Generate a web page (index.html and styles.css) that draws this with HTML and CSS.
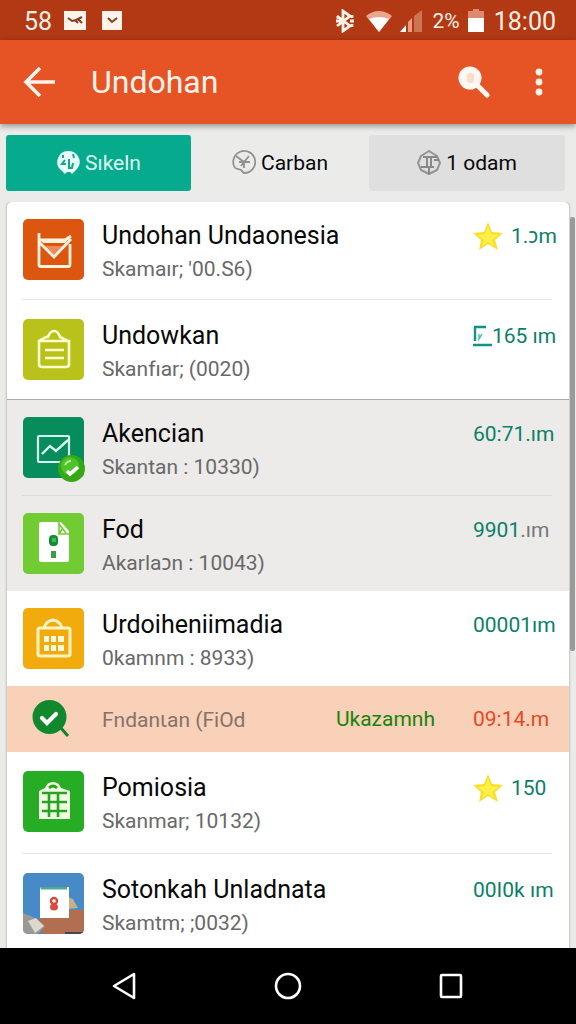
FILE: index.html
```html
<!DOCTYPE html>
<html lang="id">
<head>
<meta charset="utf-8">
<meta name="viewport" content="width=device-width, initial-scale=1">
<title>Undohan</title>
<link rel="stylesheet" href="styles.css">
</head>
<body>
<div class="status">
  <div class="status-group">
    <span class="status-count">58</span>
    <svg class="note" width="22" height="20" viewBox="0 0 22 20"><path fill="#fff3ea" d="M0 0h22v19H0z"/><path d="M4 7l4 3 4-1 6-3M11 9l3 3M14 8l4 4" fill="none" stroke="#8a3a20" stroke-width="2"/></svg>
    <svg width="20" height="20" viewBox="0 0 20 20"><path fill="#fff3ea" d="M0 0h20v19H0z"/><path d="M6 7l4 4 5-4" fill="none" stroke="#8a3a20" stroke-width="2"/></svg>
  </div>
  <div class="status-group status-right">
    <svg width="20" height="24" viewBox="0 0 20 24"><path d="M2 7l13 10-7 5V2l7 5L2 17M1 12h6M15 12h4M3 7v3M17 6v3M17 15v3" fill="none" stroke="#fff3ea" stroke-width="2.8"/></svg>
    <svg width="28" height="24" viewBox="0 0 28 24"><path d="M1 7Q14-3 27 7L14 23z" fill="#e9a68c"/><path d="M4 10Q14 6 24 10L14 23z" fill="#fff"/></svg>
    <svg class="signal" width="24" height="24" viewBox="0 0 24 24"><path d="M1 23l6-7v7z" fill="#fff"/><path d="M9 13l4-4v14H9z" fill="#ee9c80"/><path d="M15 7l8-6v22h-8z" fill="#cf7355"/></svg>
    <span class="percent">2%</span>
    <svg class="battery" width="16" height="24" viewBox="0 0 16 24"><path d="M5 0h6v2h5v8H0V2h5z" fill="#dc8b70"/><path d="M0 9h16v14H0z" fill="#fff"/></svg>
    <span class="clock">18:00</span>
  </div>
</div>
<header class="bar">
  <button class="icon-button" aria-label="Kembali"><svg width="32" height="32" viewBox="0 0 32 32"><path d="M17 2L3 16l14 14M3 16h29" fill="none" stroke="#fff3ea" stroke-width="3.6"/></svg></button>
  <h1>Undohan</h1>
  <button class="icon-button search" aria-label="Cari"><svg width="32" height="32" viewBox="0 0 32 32"><circle cx="12" cy="12" r="11.5" fill="#fff8f2"/><rect x="9" y="7" width="7" height="10" rx="3" fill="#fbdccb"/><path d="M19 19l10 10" stroke="#fff8f2" stroke-width="5" stroke-linecap="round"/></svg></button>
  <button class="icon-button" aria-label="Menu"><svg width="8" height="28" viewBox="0 0 8 28"><g fill="#fff3ea"><circle cx="4" cy="4" r="3.4"/><circle cx="4" cy="14" r="3.4"/><circle cx="4" cy="24" r="3.4"/></g></svg></button>
</header>
<nav class="tabs">
  <button class="tab tab-active"><svg width="24" height="26" viewBox="0 0 24 26"><path d="M12 1a11 11 0 0 1 7 20l-3 3-2-2h-3l-2 2-3-3A11 11 0 0 1 12 1z" fill="#e8fff9"/><path d="M7 5v3M17 4l1 4M9 10l-3 4h4M13 9v9h3l1-5" fill="none" stroke="#12a98b" stroke-width="2"/></svg>Sıkeln</button>
  <button class="tab"><svg width="24" height="26" viewBox="0 0 24 26"><path d="M3 18A11 11 0 1 1 12 23l-3-3-6-2" fill="none" stroke="#919191" stroke-width="1.8"/><path d="M4 6l8 6 5-6M12 12l-3 4M12 12h6M12 12v6M7 12h5" fill="none" stroke="#919191" stroke-width="1.8"/></svg>Carban</button>
  <button class="tab tab-grey"><svg width="24" height="26" viewBox="0 0 24 26"><path d="M12 1l8 5 3 7-3 7-8 4-8-4-3-7 3-7z" fill="none" stroke="#949494" stroke-width="2" stroke-linejoin="round"/><path d="M6 7h14M8 17h9M10 7v10M14 7v10M4 17h4M12 17v7M17 10h5" fill="none" stroke="#888" stroke-width="2"/></svg>1 odam</button>
</nav>
<main class="list-area">
  <ul class="card">
    <li class="item line">
      <svg class="thumb" viewBox="0 0 61 61"><rect width="61" height="61" rx="5" fill="#dc560f"/><path d="M20 27h24l-13 10z" fill="#f08a58"/><path d="M16 14v32q0 1.500 2 1.500h27q2 0 2-2V25M16 21h26l6-4M16 23l15 15 17-18" fill="none" stroke="#fff3dd" stroke-width="2.800"/><path d="M17 20h28l-3 4H20z" fill="#fff3dd"/></svg>
      <div class="text"><h2>Undohan Undaonesia</h2><p>Skamaır; '00.S6)</p></div>
      <div class="value"><svg class="star" viewBox="0 0 30 28"><path d="M15 0l4 10 11 1-8 7 3 10-10-6-9 6 2-10-8-7 11-1z" fill="#f8df28"/><path d="M15 4l3 8 8 1-7 5 2 6-6-4-6 4 2-6-6-5 7-1z" fill="#fff047"/></svg>1.ɔm</div>
    </li>
    <li class="item roomy">
      <svg class="thumb" viewBox="0 0 61 61"><rect width="61" height="61" rx="5" fill="#b9c21b"/><path d="M16 22l7-4h2q2-6 6-6t6 6l8 4M16 22v23q0 3 3 3h24q3 0 3-3V22zM22 31h19M22 39h19" fill="none" stroke="#fcffd0" stroke-width="2.600"/></svg>
      <div class="text"><h2>Undowkan</h2><p>Skanfıar; (0020)</p></div>
      <div class="value"><svg class="mark" viewBox="0 0 19 22"><path d="M2 16V2h11M0 20h19" fill="none" stroke="#119482" stroke-width="2.400"/><path d="M6 9v5l3-5" fill="none" stroke="#55c2b4" stroke-width="1.500"/></svg>165 ım</div>
    </li>
    <li class="item shade shade-first line">
      <svg class="thumb" viewBox="0 0 61 61"><rect width="61" height="61" rx="5" fill="#078c5c"/><rect x="15" y="19" width="31" height="26" rx="1" fill="none" stroke="#d7fff0" stroke-width="2.200"/><path d="M19 37l8-8 6 5 12-11" fill="none" stroke="#d7fff0" stroke-width="2.400"/><circle cx="48.500" cy="51.500" r="13.500" fill="#35a817"/><circle cx="47" cy="49" r="9" fill="#4fc32b"/><path d="M42 48q2-4 6-4" fill="none" stroke="#b9ef98" stroke-width="2"/><path d="M44 54l3 3 8-7" fill="none" stroke="#fff" stroke-width="3.600"/></svg>
      <div class="text"><h2>Akencian</h2><p>Skantan : 10330)</p></div>
      <div class="value">60:71.ım</div>
    </li>
    <li class="item shade">
      <svg class="thumb" viewBox="0 0 61 61"><rect width="61" height="61" rx="5" fill="#70cc32"/><path d="M18 9h20l8 9v29q0 2-2 2H18q-2 0-2-2V11q0-2 2-2z" fill="#fff"/><path d="M36 9v12h10M36 11l7 9M40 15l-4 6" fill="none" stroke="#70cc32" stroke-width="1.600"/><rect x="26" y="22" width="9" height="11" rx="4" fill="#148d32"/><path d="M29 25h4v4h-4z" fill="#48b653"/><rect x="28" y="38" width="5" height="7" fill="#3d9c3c"/></svg>
      <div class="text"><h2>Fod</h2><p>Akarlaɔn : 10043)</p></div>
      <div class="value">9901<span class="muted">.ım</span></div>
    </li>
    <li class="item">
      <svg class="thumb" viewBox="0 0 61 61"><rect width="61" height="61" rx="5" fill="#f2ab0c"/><rect x="15" y="20" width="32" height="28" rx="2" fill="none" stroke="#fff3c2" stroke-width="3"/><path d="M21 20q2-7 9-8 7 1 9 8" fill="none" stroke="#fff3c2" stroke-width="2.800"/><path d="M21 28h5v6h-5zM28 28h5v6h-5zM35 28h6v6h-6zM21 37h5v6h-5zM28 37h5v6h-5zM35 37h6v6h-6z" fill="#fff9dc"/></svg>
      <div class="text"><h2>Urdoiheniimadia</h2><p>0kamnm : 8933)</p></div>
      <div class="value">00001ım</div>
    </li>
    <li class="item notice">
      <svg class="notice-icon" viewBox="0 0 61 40"><path d="M37 28l8 9" stroke="#12812b" stroke-width="3"/><circle cx="26.500" cy="18" r="17" fill="#11882e"/><path d="M19 19l5 5 9-9" fill="none" stroke="#fff" stroke-width="4.200" stroke-linecap="round"/></svg>
      <p class="notice-name">Fndanɩan (FiOd</p>
      <p class="notice-state">Ukazamnh</p>
      <div class="value alert">09:14.m</div>
    </li>
    <li class="item roomy line">
      <svg class="thumb" viewBox="0 0 61 61"><rect width="61" height="61" rx="5" fill="#27ad25"/><path d="M16 20l6-3q2-6 8-6t8 6l9 3v28H16z" fill="#efffdf"/><path d="M26 17q4-4 8 0M19 22h25M19 31h25M19 40h25M26 22v24M35 22v24" fill="none" stroke="#27a225" stroke-width="2.600"/></svg>
      <div class="text"><h2>Pomiosia</h2><p>Skanmar; 10132)</p></div>
      <div class="value"><svg class="star" viewBox="0 0 30 28"><path d="M15 0l4 10 11 1-8 7 3 10-10-6-9 6 2-10-8-7 11-1z" fill="#f8df28"/><path d="M15 4l3 8 8 1-7 5 2 6-6-4-6 4 2-6-6-5 7-1z" fill="#fff047"/></svg>150</div>
    </li>
    <li class="item roomy">
      <svg class="thumb" viewBox="0 0 61 61"><defs><clipPath id="round"><rect width="61" height="61" rx="5"/></clipPath></defs><g clip-path="url(#round)"><rect width="61" height="61" fill="#4889c7"/><path d="M14 47l33-10h14v24H20z" fill="#b16e50"/><path d="M42 59h19v2H42z" fill="#43454f"/><path d="M45 24l5 2 5 9-10 1z" fill="#c5b08c"/><path d="M0 40l10 4 12 9-7 8H0z" fill="#9b9994"/><path d="M5 48l8-3 8 8-9 7z" fill="#ddd8cf"/><path d="M17 14h29v31H17z" fill="#fff"/><path d="M17 14h27v2.500H18z" fill="#50a991"/><circle cx="31" cy="28" r="3" fill="none" stroke="#d94740" stroke-width="2.400"/><ellipse cx="31" cy="34" rx="4" ry="3.500" fill="#dc4b43"/></g></svg>
      <div class="text"><h2>Sotonkah Unladnata</h2><p>Skamtm; ;0032)</p></div>
      <div class="value">00I0k ım</div>
    </li>
  </ul>
  <div class="scrollbar"></div>
</main>
<footer class="system">
  <button aria-label="Kembali"><svg width="28" height="28" viewBox="0 0 28 28"><path d="M23 2v24L3 14z" fill="none" stroke="#fff" stroke-width="2.600" stroke-linejoin="round"/></svg></button>
  <button aria-label="Beranda"><svg width="28" height="28" viewBox="0 0 28 28"><circle cx="14" cy="14" r="12" fill="none" stroke="#fff" stroke-width="2.600"/></svg></button>
  <button aria-label="Terbaru"><svg width="28" height="28" viewBox="0 0 28 28"><rect x="4" y="3" width="20" height="22" rx="1" fill="none" stroke="#fff" stroke-width="2.600"/></svg></button>
</footer>
</body>
</html>
```
FILE: styles.css
```css
* { box-sizing: border-box; margin: 0; padding: 0; }
body {
  display: flex;
  flex-direction: column;
  height: 100vh;
  overflow: hidden;
  background: #ebebea;
  color: #080808;
  font-family: Roboto, "Noto Sans", sans-serif;
}
button { border: 0; background: none; font: inherit; color: inherit; }
svg { flex: none; display: block; }
.status {
  display: flex;
  justify-content: space-between;
  align-items: center;
  height: 40px;
  flex: none;
  padding: 2px 20px 0 24px;
  background: #b23914;
  color: #fff0e6;
  font-size: 24px;
}
.status-group { display: flex; align-items: center; }
.status-count { margin-right: 12px; font-size: 25px; }
.note { margin-right: 16px; }
.status-right { gap: 10px; }
.signal { margin-left: -4px; }
.percent { font-size: 21px; }
.battery { margin-left: -2px; }
.clock { font-size: 25px; }
.bar {
  position: relative;
  display: flex;
  align-items: center;
  height: 84px;
  flex: none;
  padding: 0 33px 0 23px;
  background: #e65426;
  color: #fff3ea;
  box-shadow: 0 2px 6px rgba(0, 0, 0, .4);
}
.bar h1 { flex: 1; margin-left: 36px; font-size: 32px; font-weight: 400; }
.search { margin-right: 45px; }
.tabs {
  display: grid;
  grid-template-columns: 185fr 178fr 196fr;
  flex: none;
  padding: 11px 11px 11px 6px;
}
.tab {
  display: flex;
  align-items: center;
  justify-content: center;
  gap: 5px;
  height: 56px;
  border-radius: 3px;
  font-size: 21px;
}
.tab-active { background: #06aa8c; color: #dcfff6; }
.tab-grey { background: #e0dfdf; }
.list-area {
  position: relative;
  flex: 1;
  min-height: 0;
  overflow: hidden;
  padding: 0 7px;
}
.card {
  list-style: none;
  border-radius: 5px 5px 0 0;
  background: #fff;
  box-shadow: 0 0 3px rgba(0, 0, 0, .35);
}
.item {
  position: relative;
  display: flex;
  align-items: flex-start;
  gap: 18px;
  padding: 17px 16px;
}
.line { padding-bottom: 20px; }
.roomy { padding-top: 19px; padding-bottom: 19px; }
.roomy.line { padding-bottom: 22px; }
.line::after {
  content: "";
  position: absolute;
  left: 15px;
  right: 17px;
  bottom: 0;
  border-bottom: 1px solid #e6e6e6;
}
.shade { background: #edebe9; }
.shade::after { border-color: #dddcda; }
.shade-first { border-top: 1px solid #aaa; padding-bottom: 18px; }
.thumb { width: 61px; height: 61px; overflow: visible; }
.text { flex: 1; min-width: 0; margin-bottom: -5px; white-space: nowrap; }
.text h2 { font-size: 25px; line-height: 34px; font-weight: 400; }
.text p { font-size: 21px; line-height: 32px; color: #696969; }
.value {
  display: flex;
  align-items: center;
  width: 80px;
  flex: none;
  font-size: 21px;
  line-height: 34px;
  white-space: nowrap;
  color: #0b7f68;
}
.star { width: 30px; height: 28px; margin-right: 8px; }
.mark { width: 19px; height: 22px; }
.muted { color: #777; }
.notice { align-items: center; height: 66px; padding: 0 16px; background: #f9d0b8; }
.notice-icon { width: 61px; height: 40px; }
.notice-name { flex: 1; font-size: 21px; color: #85736a; }
.notice-state { margin-right: 20px; font-size: 21px; color: #15850b; }
.alert { color: #e34a22; }
.scrollbar {
  position: absolute;
  top: 15px;
  right: 1px;
  width: 5px;
  height: 434px;
  border-radius: 2px;
  background: #9a9a9a;
}
.system {
  display: flex;
  justify-content: center;
  align-items: center;
  gap: 135px;
  height: 76px;
  flex: none;
  background: #000;
}
```
